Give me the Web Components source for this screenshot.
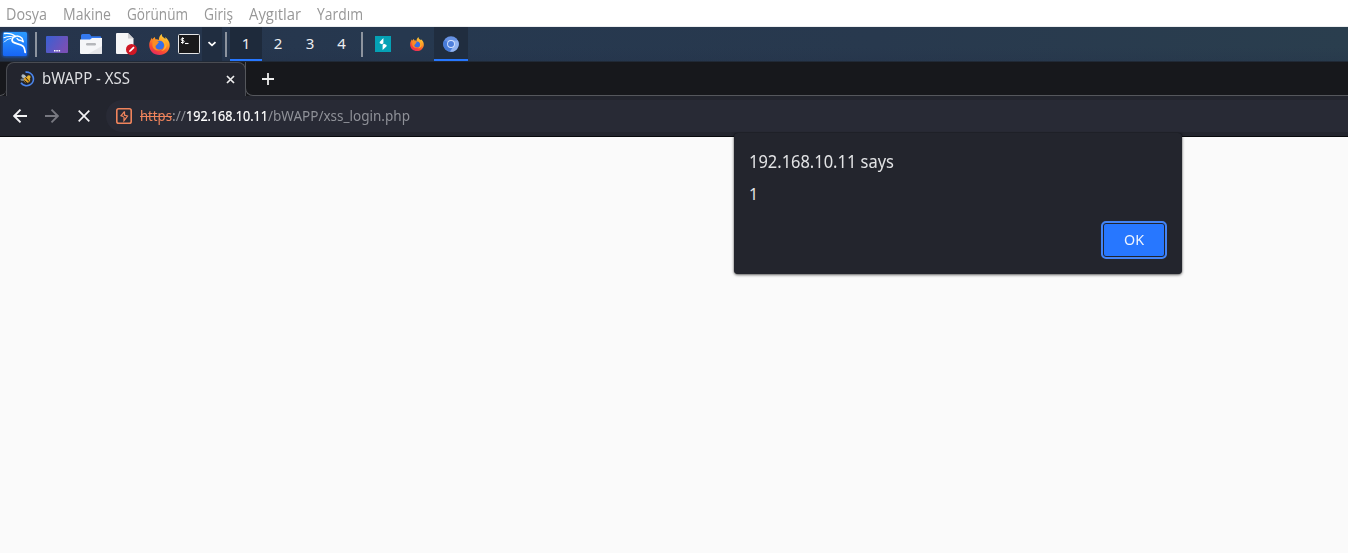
<!DOCTYPE html>
<html lang="tr">
<head>
<meta charset="utf-8">
<title>bWAPP - XSS</title>
<style>
html,body{margin:0;height:100%;overflow:hidden;background:#fafafa;font-family:"Noto Sans","Open Sans",sans-serif}
</style>
</head>
<body>
<desktop-screen></desktop-screen>
<script>
function define(name, html, ready){
  customElements.define(name, class extends HTMLElement{
    connectedCallback(){
      if(this.shadowRoot) return;
      const t=document.createElement('template'); t.innerHTML=html;
      this.attachShadow({mode:'open'}).append(t.content.cloneNode(true));
      if(ready) ready(this,this.shadowRoot);
    }
  });
}

/* Text run scaled horizontally to a given width (w, in px). */
define('text-run','<style>:host{display:inline-block;white-space:nowrap}span{display:inline-block;transform-origin:0 50%}:host([strike]) span{text-decoration:line-through;text-decoration-thickness:1px}</style><span><slot></slot></span>',(el,r)=>{
  const s=r.querySelector('span'), w=+el.getAttribute('w');
  const cur=s.getBoundingClientRect().width;
  if(w&&cur){ s.style.transform='scaleX('+(w/cur)+')'; el.style.width=w+'px'; }
});

const icons={
kali:`<svg width="30" height="32" viewBox="0 0 30 32"><defs><linearGradient id="k" x2="0" y2="1"><stop stop-color="#2b9bff"/><stop offset="1" stop-color="#1765f5"/></linearGradient><filter id="b" x="-20%" y="-20%" width="140%" height="140%"><feGaussianBlur stdDeviation="1.8"/></filter></defs><rect x="2" y="4" width="26" height="25" rx="3" fill="#1764df" opacity=".8" filter="url(#b)"/><rect x="3" y="4" width="24" height="24" rx="1.5" fill="url(#k)"/><g fill="none" stroke="#fff" stroke-linecap="round" stroke-linejoin="round"><path d="M4.500 5.500c4-.5 8 .3 11 3" stroke-width="1.400"/><path d="M4 9.800c3-1.300 6.500-1.500 9.500-.8" stroke-width="1.100"/><path d="M4.300 14c1.500-1.800 3.500-3 6.500-3.500" stroke-width=".9"/><path d="M15 8.300c2-.6 5-.3 7 2l1.300 3.500-2.300-1.300-2.500-.5-1.500-1.500" stroke-width="1.400"/><path d="M15 8.500c-3 1-3.800 3.700-2 5.500 2.500 2.300 7.500 1.300 10.200 4.300 1.400 1.700 1.800 3.700 2 6" stroke-width="1.800"/></g></svg>`,
desk:`<svg width="22" height="17" viewBox="0 0 22 17"><defs><linearGradient id="d" x2="1" y2=".5"><stop stop-color="#3860d4"/><stop offset="1" stop-color="#7850b6"/></linearGradient></defs><rect width="22" height="17" rx="1" fill="url(#d)"/><path d="M8 14h1.500v1.500H8zM10.300 14h1.500v1.500h-1.500zM12.600 14h1.500v1.500h-1.500z" fill="#fff"/></svg>`,
folder:`<svg width="22" height="20" viewBox="0 0 22 20"><path d="M1 1.500Q1 0 2.500 0H9q1 0 1.500 1l.7 1.200H20q1.200 0 1.200 1.200V8H1z" fill="#3479ee"/><path d="M0 5.500h10l2-1.500h10v15q0 1-1 1H1q-1 0-1-1z" fill="#f5f6f8"/><path d="M22 12v7q0 1-1 1H8z" fill="#e5e6e9"/><rect x="6" y="9" width="10" height="2.500" rx="1.200" fill="#b5b7bb"/></svg>`,
doc:`<svg width="22" height="22" viewBox="0 0 22 22"><path d="M1 0h11l5.500 5.500V21H1q-1 0-1-1V1q0-1 1-1z" fill="#f5f5f6"/><path d="M12 0l5.500 5.500H12z" fill="#cfcfd2"/><circle cx="15.500" cy="16.500" r="5.500" fill="#cf1724"/><path d="M13 19l.6-1.800 3.800-3.700 1.200 1.200-3.800 3.700z" fill="#fff"/></svg>`,
fox:`<svg width="21" height="21" viewBox="0 0 21 21"><defs><linearGradient id="f" x1=".8" y1="0" x2=".3" y2="1"><stop stop-color="#ffe13d"/><stop offset=".4" stop-color="#ff9625"/><stop offset=".75" stop-color="#fa4a32"/><stop offset="1" stop-color="#e72863"/></linearGradient></defs><path d="M13 0c-.7 2 .8 3 2.500 4.300l1 .7c0-.9-.2-1.400-.5-2 4 2.800 5 6.500 4.700 9.300C20 17.500 16 21 10.600 21 4.500 21 .2 16.700.2 11.200c0-3 1.100-5 2.800-7.700 0 1 .2 1.700.5 2.100.4-1 1.700-2.200 2.500-2.600-.1 1 .3 2 .8 2.400 1.300-.2 2 0 3 .6C9.700 3.500 11 1.200 13 0z" fill="url(#f)"/><circle cx="10.600" cy="11.200" r="4.500" fill="#366fe9"/><path d="M3.500 7c2 .4 4-.5 6.500 1L8 10.400c-.5 1-1.800 1-1.600 2.600.8 3 5 3.500 7.200 1.300-3.400 4-9.600 2.500-10.200-2.500z" fill="#fa8d26"/><path d="M12.500 5.300c2.500.6 4.500 3 4 6.200.8-.6 1-1.400 1-2.200C18.500 14 15 17 12 17c4-2 4.700-6 2.300-9z" fill="#ffb52b"/></svg>`,
term:`<svg width="22" height="20" viewBox="0 0 22 20"><rect x=".5" y=".5" width="21" height="19" rx="1" fill="#19191b" stroke="#e4e5e7"/><g fill="none" stroke="#fff"><path d="M6 4.500H4.200q-1 0-1 1t1 1h.9q1 0 1 1t-1 1H3M4.600 3.300v6.500"/><path d="M7 9.500h3.500" stroke-width="1.100"/></g></svg>`,
chev:`<svg width="10" height="6" viewBox="0 0 10 6"><path d="M1.500 1.200L5 4.400l3.500-3.200" fill="none" stroke="#fff" stroke-width="1.800"/></svg>`,
burp:`<svg width="16" height="16" viewBox="0 0 16 16"><path fill="#05a1b5" d="M0 0h16v16H0z"/><path d="M8.400 2v5.200L7 8.300 4.700 7.200V6zM7.600 14V8.800L9 7.700l2.600 1.200v1.300z" fill="#fff"/></svg>`,
chrom:`<svg width="16" height="16" viewBox="0 0 16 16"><circle cx="8" cy="8" r="7.800" fill="#6792e4"/><path d="M8 8L1.200 4.200A7.800 7.800 0 0 0 7 15.700l3.500-6.200z" fill="#477bd8"/><path d="M8 4.400h6.900A7.800 7.800 0 0 1 7 15.700l4-6z" fill="#92b4f1"/><circle cx="8" cy="8" r="3.900" fill="#d6e4ff"/><circle cx="8" cy="8" r="3" fill="#4f80dd"/></svg>`,
bee:`<svg width="16" height="16" viewBox="0 0 16 16"><path d="M6.500 1.200A6.800 6.800 0 1 1 2 11.800" fill="none" stroke="#4b86ed" stroke-width="1.700"/><ellipse cx="4.800" cy="5.500" rx="2.600" ry="1.800" transform="rotate(35 4.800 5.500)" fill="#aebcc6"/><ellipse cx="4" cy="8.800" rx="2.600" ry="1.300" fill="#70828e"/><ellipse cx="8" cy="8.700" rx="3.200" ry="3" fill="#dba12a"/><path d="M6.500 6.500l3.500 4M5.300 9.500l2.700 2.300" stroke="#211d18"/><circle cx="9.800" cy="6" r="1.800" fill="#e6b735"/></svg>`,
close:`<svg width="9" height="9" viewBox="0 0 9 9"><path d="M1 1l7 7M8 1L1 8" stroke="#eee" stroke-width="1.700"/></svg>`,
plus:`<svg width="12" height="12" viewBox="0 0 12 12"><path d="M6 0v12M0 6h12" stroke="#eee" stroke-width="1.800"/></svg>`,
back:`<svg width="14" height="14" viewBox="0 0 14 14"><path d="M14 7H1.500M7.500.7L1.200 7l6.300 6.300" fill="none" stroke="#f3f3f5" stroke-width="1.900"/></svg>`,
fwd:`<svg width="14" height="14" viewBox="0 0 14 14"><path d="M0 7h12.500M6.500.7L12.800 7l-6.300 6.300" fill="none" stroke="#777880" stroke-width="1.900"/></svg>`,
stop:`<svg width="12" height="12" viewBox="0 0 12 12"><path d="M.7.700l10.600 10.600M11.300.700L.7 11.300" stroke="#f3f3f5" stroke-width="1.700"/></svg>`,
site:`<svg width="16" height="16" viewBox="0 0 16 16"><rect x=".8" y=".8" width="14.400" height="14.400" rx="1.800" fill="none" stroke="#f0845c" stroke-width="1.600"/><path d="M8.600 3.300L5 7.800l2.700.8M8.500 3.500v3.700l3 .8-3.500 4.700V9" fill="none" stroke="#f0845c" stroke-width="1.200"/></svg>`
};
define('ui-icon','<style>:host{display:flex;flex:none;align-items:center;justify-content:center}svg{display:block;width:var(--s);height:var(--s)}</style>',(el,r)=>{
  r.innerHTML+=icons[el.getAttribute('name')];
});

define('vm-menu',`<style>
:host{display:flex;box-sizing:border-box;height:27px;padding:1px 6px 0;gap:16px;align-items:center;background:#fff;border-bottom:1px solid #eceef0;color:#979797;font:400 15.500px/20px "Open Sans","Noto Sans",sans-serif}
</style><text-run w="41">Dosya</text-run><text-run w="48">Makine</text-run><text-run w="61">Görünüm</text-run><text-run w="29">Giriş</text-run><text-run w="52">Aygıtlar</text-run><text-run w="46">Yardım</text-run>`);

define('panel-sep','<style>:host{display:block;flex:none;width:2px;height:25px;background:#8d949f}</style>');

define('work-space',`<style>:host{box-sizing:border-box;display:flex;width:32px;height:34px;align-items:center;justify-content:center;color:#eceef1;font:15px/20px "Noto Sans",sans-serif;border-bottom:2px solid transparent}
:host([active]){background:#1e2a3b;border-color:#2777ff}</style><slot></slot>`);

define('task-panel',`<style>
:host{display:flex;align-items:center;height:34px;background:linear-gradient(#fff0 60%,#202b4430),linear-gradient(90deg,#26344b 0,#26384f 30%,#28394e 65%,#2a3e4e 100%)}
.menu{width:20px;height:34px;background:#202d40;margin:0 3px 0 2px}
.task{width:34px;height:34px;box-sizing:border-box;background:#202d3f;border-bottom:2px solid #2777ff;margin-left:10px;padding-top:2px}
.small{--s:14px;margin-left:19px}
</style>
<ui-icon name="kali"></ui-icon><panel-sep style="margin:0 9px 0 5px"></panel-sep>
<ui-icon name="desk"></ui-icon><ui-icon name="folder" style="margin-left:12px"></ui-icon>
<ui-icon name="doc" style="margin-left:14px"></ui-icon><ui-icon name="fox" style="margin-left:10.500px;margin-right:.5px"></ui-icon>
<ui-icon name="term" style="margin-left:8px"></ui-icon><ui-icon name="chev" class="menu"></ui-icon>
<panel-sep style="margin:0 3px 0 0"></panel-sep>
<work-space active>1</work-space><work-space>2</work-space><work-space>3</work-space><work-space style="width:31px">4</work-space>
<panel-sep style="margin:0 12px 0 4px"></panel-sep>
<ui-icon name="burp"></ui-icon><ui-icon name="fox" class="small"></ui-icon><ui-icon name="chrom" class="task"></ui-icon>`);

define('tab-strip',`<style>
:host{display:flex;height:35px;background:#17181c;border-top:1px solid #202936;box-sizing:border-box;color:#dedfe2;font:15.500px/20px "Noto Sans",sans-serif}
.l,.r{box-sizing:border-box;height:34px;border-bottom:1px solid #55575c}
.l{width:6px;border-bottom-right-radius:7px}
.r{flex:1;display:flex;align-items:center;padding-left:16px;border-left:1px solid #55575c;border-bottom-left-radius:8px;margin-left:-1px}
.mid{display:flex;width:240px}
.tab{box-sizing:border-box;flex:1;display:flex;align-items:center;border:1px solid #4a4c52;border-bottom:0;border-radius:8px 8px 0 0;background:#23252e;padding:0 10px 1px 12px}
text-run{margin:-2px 0 0 7px}.x{margin-left:auto}
</style><div class="l"></div><div class="mid"><div class="tab"><ui-icon name="bee"></ui-icon><text-run w="88">bWAPP - XSS</text-run><ui-icon class="x" name="close"></ui-icon></div></div><div class="r"><ui-icon name="plus"></ui-icon></div>`);

define('nav-bar',`<style>
:host{display:flex;align-items:center;box-sizing:border-box;height:41px;background:#23252e;border-bottom:1px solid #08090c;padding-left:13px}
.omni{flex:1;display:flex;align-items:center;height:32px;background:#282a35;border-radius:16px 0 0 16px;margin-left:16px;padding-left:10px;font:14px/20px "Noto Sans",sans-serif;color:#8f9198}
.bad{color:#f0845c;margin-left:8px}.host{color:#fff;-webkit-text-stroke:.2px #fff}
</style><ui-icon name="back"></ui-icon><ui-icon name="fwd" style="margin-left:18px"></ui-icon><ui-icon name="stop" style="margin-left:19px"></ui-icon>
<div class="omni"><ui-icon name="site"></ui-icon><text-run strike class="bad" w="32">https</text-run><text-run w="14">://</text-run><text-run class="host" w="82">192.168.10.11</text-run><text-run w="142">/bWAPP/xss_login.php</text-run></div>`);

define('alert-dialog',`<style>
:host{position:absolute;left:734px;top:133px;width:448px;height:141px;box-sizing:border-box;border-radius:4px;background:#23252d;box-shadow:0 1px 3px #0009,0 0 1px #0008;padding:16px 16px 15px 15px;display:flex;flex-direction:column;color:#e2e3e5;font-family:"Noto Sans",sans-serif}
.title{font-size:17.500px;line-height:24px}.msg{font-size:16px;line-height:22px;margin-top:10px}
button{margin:auto -1px 0 auto;align-self:flex-end;width:66px;height:38px;border:2px solid #4384f6;border-radius:5px;background:#2777ff;box-shadow:inset 0 0 0 1px #20242e;color:#eef4ff;font:15px/20px "Noto Sans",sans-serif;padding:0 0 2px}
</style><div class="title"><text-run w="145">192.168.10.11 says</text-run></div><div class="msg">1</div><button><text-run w="20">OK</text-run></button>`);

define('desktop-screen',`<style>:host{display:flex;flex-direction:column;height:553px;position:relative;overflow:hidden}main{flex:1;background:#fafafa}</style>
<vm-menu></vm-menu><task-panel></task-panel><tab-strip></tab-strip><nav-bar></nav-bar><main></main><alert-dialog></alert-dialog>`);
</script>
</body>
</html>
